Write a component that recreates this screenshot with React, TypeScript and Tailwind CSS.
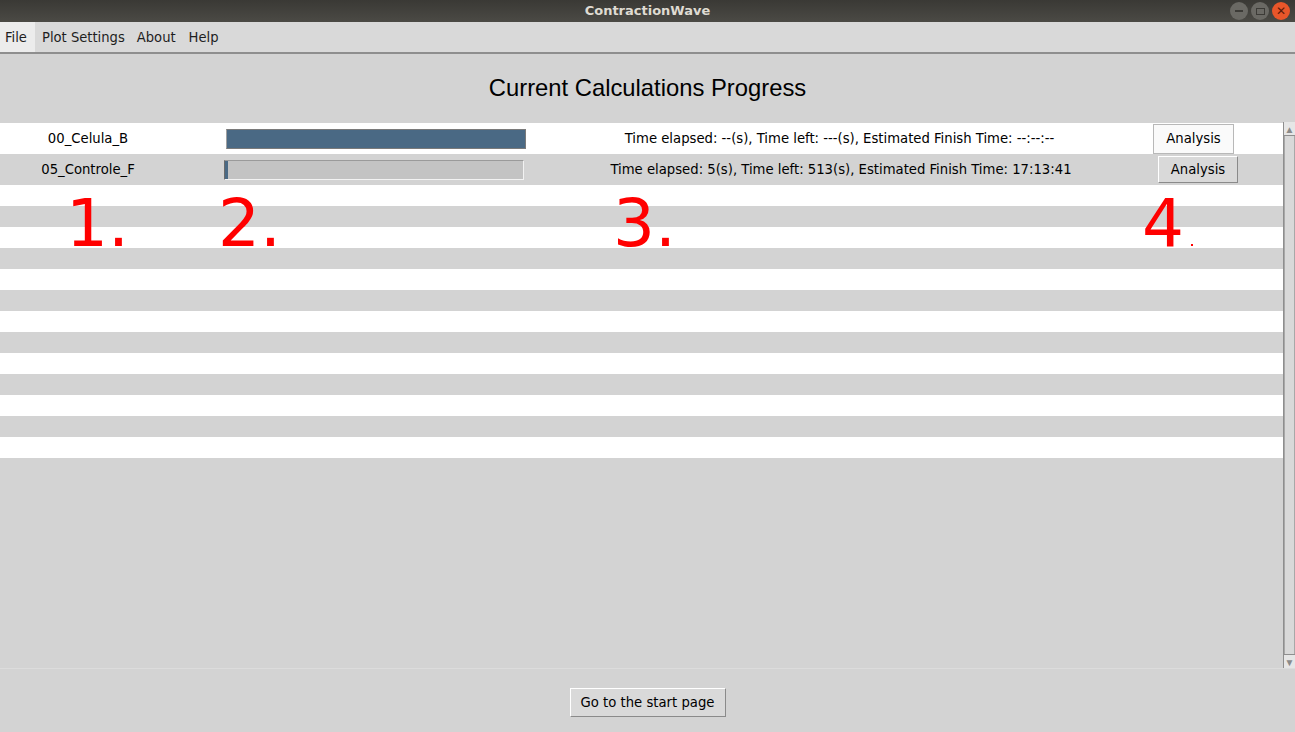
import React from "react";

type Job = {
  name: string;
  progress: number;
  status: string;
  stripe: string;
  barLeft: string;
  active: boolean;
};

const jobs: Job[] = [
  {
    name: "00_Celula_B",
    progress: 100,
    status: "Time elapsed: --(s), Time left: ---(s), Estimated Finish Time: --:--:--",
    stripe: "bg-white",
    barLeft: "ml-[50px]",
    active: true,
  },
  {
    name: "05_Controle_F",
    progress: 1,
    status: "Time elapsed: 5(s), Time left: 513(s), Estimated Finish Time: 17:13:41",
    stripe: "bg-[#d3d3d3]",
    barLeft: "ml-[48px]",
    active: false,
  },
];

const tk = "font-['DejaVu_Sans_Condensed','DejaVu_Sans',sans-serif]";

function TitleBar() {
  return (
    <div className="relative flex h-[22px] items-center justify-center bg-gradient-to-b from-[#3a3935] to-[#4b4a45]">
      <span className="font-['DejaVu_Sans',sans-serif] text-[13px] font-bold text-[#dfdbd2]">
        ContractionWave
      </span>
      <div className="absolute right-[5px] top-[2px] flex items-center gap-[3px]">
        <span className="grid size-[18px] place-items-center rounded-full bg-[#6a6964]">
          <span className="h-[2px] w-[8px] bg-[#3c3b37]" />
        </span>
        <span className="grid size-[18px] place-items-center rounded-full bg-[#6a6964]">
          <span className="h-[7px] w-[9px] border-[1.5px] border-[#3c3b37]" />
        </span>
        <span className="grid size-[18px] place-items-center rounded-full bg-[#e8562a] text-[12px] leading-none text-[#5a1a08]">
          ✕
        </span>
      </div>
    </div>
  );
}

function MenuBar() {
  return (
    <div className={`flex h-[32px] items-stretch border-b-2 border-[#8e8e8e] bg-[#d9d9d9] text-[14.6px] text-[#1e1e1e] ${tk}`}>
      <div className="flex w-[35px] items-center bg-[#ececec] pl-[5px]">File</div>
      <div className="flex items-center pl-[7px] pr-[6px]">Plot Settings</div>
      <div className="flex items-center px-[6px]">About</div>
      <div className="flex items-center px-[7px]">Help</div>
    </div>
  );
}

function JobRow({ job }: { job: Job }) {
  return (
    <div className={`flex h-[31px] items-center ${job.stripe} text-[14.7px] text-black ${tk}`}>
      <div className="w-[176px] text-center">{job.name}</div>
      <div
        className={`${job.barLeft} h-[20px] w-[300px] border ${
          job.active ? "border-[#7a7a7a] border-l-[#a0a0a0]" : "border-[#f2f2f2] border-l-[#6a6a6a] border-t-[#9a9a9a]"
        } bg-[#c3c3c3]`}
      >
        <div className="h-full bg-[#4a6984]" style={{ width: `${job.progress}%` }} />
      </div>
      <div className="flex-1 text-center">{job.status}</div>
      {job.active ? (
        <button className="mr-[49px] h-[30px] w-[81px] border border-[#b8b8b8] bg-[#fafafa]">
          Analysis
        </button>
      ) : (
        <button className="mr-[45px] h-[27px] w-[80px] border border-[#8a8a8a] border-l-white border-t-white bg-[#d9d9d9]">
          Analysis
        </button>
      )}
    </div>
  );
}

function Scrollbar() {
  return (
    <div className="flex w-[12px] flex-col border-l border-[#8e8e8e] bg-[#d9d9d9]">
      <div className="flex h-[14px] items-center justify-center border-b border-[#8e8e8e] bg-[#e6e6e6] text-[10px] leading-none text-[#8a8a8a]">
        ▲
      </div>
      <div className="flex-1 border-x border-[#a8a8a8]" />
      <div className="flex h-[14px] items-center justify-center border-t border-[#8e8e8e] bg-[#e6e6e6] text-[10px] leading-none text-[#8a8a8a]">
        ▼
      </div>
    </div>
  );
}

const marks = [
  { n: "1.", cls: "left-[66px]" },
  { n: "2.", cls: "left-[218px]" },
  { n: "3.", cls: "left-[613px]" },
  { n: "4", cls: "left-[1142px]" },
];

export default function App() {
  const stripes = Array.from({ length: 13 }, (_, i) => i);

  return (
    <div className="flex h-[732px] w-[1295px] flex-col overflow-hidden bg-[#d3d3d3]">
      <TitleBar />
      <MenuBar />

      <div className="flex h-[68px] items-center justify-center">
        <h1 className="font-['Liberation_Sans',Arial,sans-serif] text-[23.8px] text-black">
          Current Calculations Progress
        </h1>
      </div>

      <div className="flex h-[546px]">
        <div className="relative flex-1 pt-[1px]">
          {jobs.map((job) => (
            <JobRow key={job.name} job={job} />
          ))}
          {stripes.map((i) => (
            <div key={i} className={`h-[21px] ${i % 2 === 0 ? "bg-white" : "bg-[#d3d3d3]"}`} />
          ))}

          {marks.map((m) => (
            <span
              key={m.n}
              className={`absolute top-[69px] ${m.cls} font-['DejaVu_Sans',sans-serif] text-[66px] leading-none text-[#ff0000]`}
            >
              {m.n}
            </span>
          ))}
          <span className="absolute left-[1191px] top-[122px] size-[2px] bg-[#ff0000]" />
        </div>
        <Scrollbar />
      </div>

      <div className="flex flex-1 items-center justify-center border-t border-[#dcdcdc] pt-[4px]">
        <button
          className={`h-[29px] w-[156px] border border-[#8a8a8a] border-l-white border-t-white bg-[#d9d9d9] text-[14.7px] text-black ${tk}`}
        >
          Go to the start page
        </button>
      </div>
    </div>
  );
}
